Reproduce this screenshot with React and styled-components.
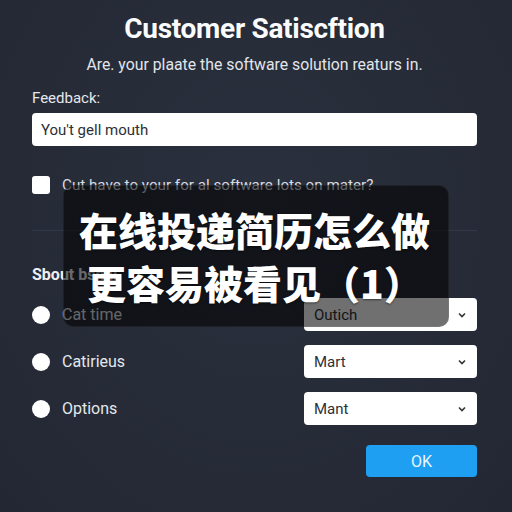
import React from 'react';
import styled, { createGlobalStyle } from 'styled-components';

const GlobalStyle = createGlobalStyle`
  html, body {
    margin: 0;
    padding: 0;
    background: #262b38;
  }
  body {
    font-family: Roboto, "Noto Sans", "Liberation Sans", sans-serif;
  }
`;

const Page = styled.div`
  position: relative;
  width: 512px;
  height: 512px;
  overflow: hidden;
  background: radial-gradient(ellipse at 50% 40%, #2a303d 0%, #252a36 70%, #222733 100%);
  color: #fff;
  box-sizing: border-box;
  padding: 14px 35px 0 32px;
`;

const Title = styled.h1`
  margin: 0;
  text-align: center;
  font-size: 28px;
  font-weight: 700;
  letter-spacing: -0.3px;
  line-height: 30px;
  color: #fafbfc;
`;

const Subtitle = styled.p`
  margin: 12px 0 0;
  text-align: center;
  font-size: 15.8px;
  line-height: 18px;
  color: #e2e5ea;
`;

const Label = styled.div`
  margin-top: 15px;
  font-size: 15px;
  line-height: 18px;
  color: #e6e8ec;
`;

const TextInput = styled.div`
  margin-top: 6px;
  height: 33px;
  background: #fff;
  border-radius: 4px;
  display: flex;
  align-items: center;
  padding: 0 9px;
  font-size: 15px;
  color: #2c2f36;
`;

const CheckRow = styled.div`
  margin-top: 30px;
  display: flex;
  align-items: center;
  gap: 12px;
  font-size: 15.2px;
  color: #d9dce2;
`;

const Box = styled.span`
  width: 18px;
  height: 18px;
  border-radius: 3px;
  background: #fff;
  flex: none;
`;

const Divider = styled.hr`
  margin: 36px 0 0;
  border: 0;
  height: 1px;
  background: #323847;
`;

const Heading = styled.div`
  margin-top: 34px;
  font-size: 16px;
  font-weight: 700;
  line-height: 20px;
  color: #eef0f3;
`;

const OptionRows = styled.div`
  margin-top: 13px;
  display: flex;
  flex-direction: column;
  gap: 14px;
`;

const OptionRow = styled.div`
  display: flex;
  align-items: center;
  justify-content: space-between;
`;

const RadioLabel = styled.label`
  display: flex;
  align-items: center;
  gap: 12px;
  font-size: 16px;
  color: #e4e7eb;
`;

const Dot = styled.span`
  width: 18px;
  height: 18px;
  border-radius: 50%;
  background: #fff;
  flex: none;
`;

const Select = styled.div`
  width: 173px;
  height: 33px;
  box-sizing: border-box;
  background: #fff;
  border-radius: 4px;
  display: flex;
  align-items: center;
  justify-content: space-between;
  padding: 0 10px 0 10px;
  font-size: 15px;
  color: #2d3038;
`;

const Footer = styled.div`
  margin-top: 20px;
  display: flex;
  justify-content: flex-end;
`;

const OkButton = styled.button`
  width: 111px;
  height: 32px;
  border: 0;
  border-radius: 4px;
  background: #1e9ff2;
  color: #e8f6ff;
  font-family: inherit;
  font-size: 16px;
`;

const Overlay = styled.div`
  position: absolute;
  left: 63px;
  top: 185px;
  width: 386px;
  height: 142px;
  box-sizing: border-box;
  border-radius: 10px;
  background: rgba(0, 0, 0, 0.56);
  border: 1px solid rgba(255, 255, 255, 0.06);
  display: flex;
  flex-direction: column;
  justify-content: center;
  padding-left: 15px;
  font-family: "Noto Sans CJK SC", "Noto Sans", sans-serif;
  font-size: 39px;
  font-weight: 900;
  line-height: 53px;
  color: #fff;
  text-shadow: 0 1px 2px rgba(0, 0, 0, 0.5);
`;

const OverlayLine = styled.div`
  padding-left: ${(p) => p.$indent || 0}px;
  white-space: nowrap;
`;

const Chevron = () => (
  <svg width="10" height="10" viewBox="0 0 10 10">
    <path d="M2 3.5 L5 6.5 L8 3.5" fill="none" stroke="#333" strokeWidth="1.6" />
  </svg>
);

const options = [
  { label: 'Cat time', value: 'Outich' },
  { label: 'Catirieus', value: 'Mart' },
  { label: 'Options', value: 'Mant' },
];

export default function App() {
  return (
    <>
      <GlobalStyle />
      <Page>
        <Title>Customer Satiscftion</Title>
        <Subtitle>Are. your plaate the software solution reaturs in.</Subtitle>
        <Label>Feedback:</Label>
        <TextInput>You't gell mouth</TextInput>
        <CheckRow>
          <Box />
          Cut have to your for al software lots on mater?
        </CheckRow>
        <Divider />
        <Heading>Sbout bsnal</Heading>
        <OptionRows>
          {options.map((o) => (
            <OptionRow key={o.label}>
              <RadioLabel>
                <Dot />
                {o.label}
              </RadioLabel>
              <Select>
                {o.value}
                <Chevron />
              </Select>
            </OptionRow>
          ))}
        </OptionRows>
        <Footer>
          <OkButton>OK</OkButton>
        </Footer>
        <Overlay>
          <OverlayLine>在线投递简历怎么做</OverlayLine>
          <OverlayLine $indent={8}>更容易被看见（1）</OverlayLine>
        </Overlay>
      </Page>
    </>
  );
}
